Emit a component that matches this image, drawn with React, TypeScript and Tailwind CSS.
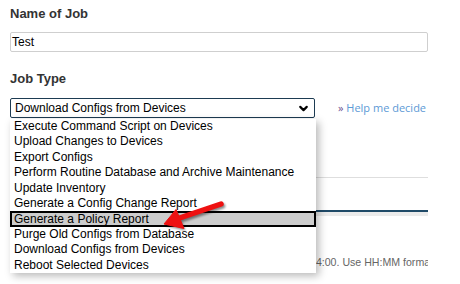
import { ChevronDown } from "lucide-react";

const jobTypes = [
  "Execute Command Script on Devices",
  "Upload Changes to Devices",
  "Export Configs",
  "Perform Routine Database and Archive Maintenance",
  "Update Inventory",
  "Generate a Config Change Report",
  "Generate a Policy Report",
  "Purge Old Configs from Database",
  "Download Configs from Devices",
  "Reboot Selected Devices",
];

function RedArrow() {
  return (
    <svg
      className="absolute left-[155px] top-[195px] pointer-events-none"
      width="76"
      height="40"
      viewBox="155 195 76 40"
    >
      <defs>
        <filter id="arrowShadow" x="-20%" y="-20%" width="140%" height="160%">
          <feGaussianBlur stdDeviation="1.2" />
        </filter>
      </defs>
      <g opacity="0.45" transform="translate(1.5 2)" filter="url(#arrowShadow)">
        <line x1="221" y1="204" x2="178" y2="218.5" stroke="#000" strokeWidth="5.5" strokeLinecap="round" />
        <polygon points="164,224 176,209.5 184,228.5" fill="#000" />
      </g>
      <line x1="221" y1="204" x2="178" y2="218.5" stroke="#ee1111" strokeWidth="5.5" strokeLinecap="round" />
      <polygon points="164,224 176,209.5 184,228.5" fill="#ee1111" stroke="#ee1111" strokeLinejoin="round" strokeWidth="1" />
    </svg>
  );
}

export default function App() {
  return (
    <div className="relative w-[460px] h-[284px] overflow-hidden bg-white font-['Liberation_Sans',Arial,sans-serif]">
      <div className="pl-[10px] pt-[6px] w-[428px]">
        <div className="text-[13px] leading-[16px] font-bold text-[#333]">Name of Job</div>
        <div className="mt-[10px] h-[20px] border border-[#cfcfcf] rounded-[2px] px-[1px] text-[12px] leading-[18px] text-black">
          Test
        </div>

        <div className="mt-[19px] text-[13px] leading-[16px] font-bold text-[#333]">Job Type</div>
        <div className="mt-[11px] flex items-center h-[20px]">
          <div className="w-[305px] shrink-0 h-[20px] border border-[#1d3b52] rounded-[2px] flex items-center justify-between pl-[4px] pr-[4px] text-[12px] text-black">
            <span>Download Configs from Devices</span>
            <ChevronDown size={13} strokeWidth={4} className="text-black" />
          </div>
          <a className="ml-[23px] whitespace-nowrap text-[11px] font-['Open_Sans',sans-serif] text-[#5d9ad6]">
            <span className="text-[#6b4f8f]">»</span> Help me decide
          </a>
        </div>

        <div className="mt-[59px] h-px bg-[#dedede]" />
        <div className="mt-[32px] h-[2px] bg-[#1f4a68]" />
        <div className="h-[4px] bg-[#ebebeb]" />
        <div className="mt-[38px] overflow-hidden whitespace-nowrap text-[10.6px] leading-[16px] text-[#666] pl-[300px]">
          14:00. Use HH:MM format
        </div>
      </div>

      <ul className="absolute left-[10px] top-[119px] w-[306px] bg-white shadow-[3px_3px_8px_rgba(0,0,0,0.28)]">
        {jobTypes.map((t) => (
          <li
            key={t}
            className={
              t === "Generate a Policy Report"
                ? "h-[15.4px] leading-[12px] pl-[2px] text-[12px] text-black bg-[#cdcdcd] border-2 border-black whitespace-nowrap"
                : "h-[15.4px] leading-[15.4px] pl-[4px] text-[12px] text-black whitespace-nowrap"
            }
          >
            {t}
          </li>
        ))}
      </ul>

      <RedArrow />
    </div>
  );
}
